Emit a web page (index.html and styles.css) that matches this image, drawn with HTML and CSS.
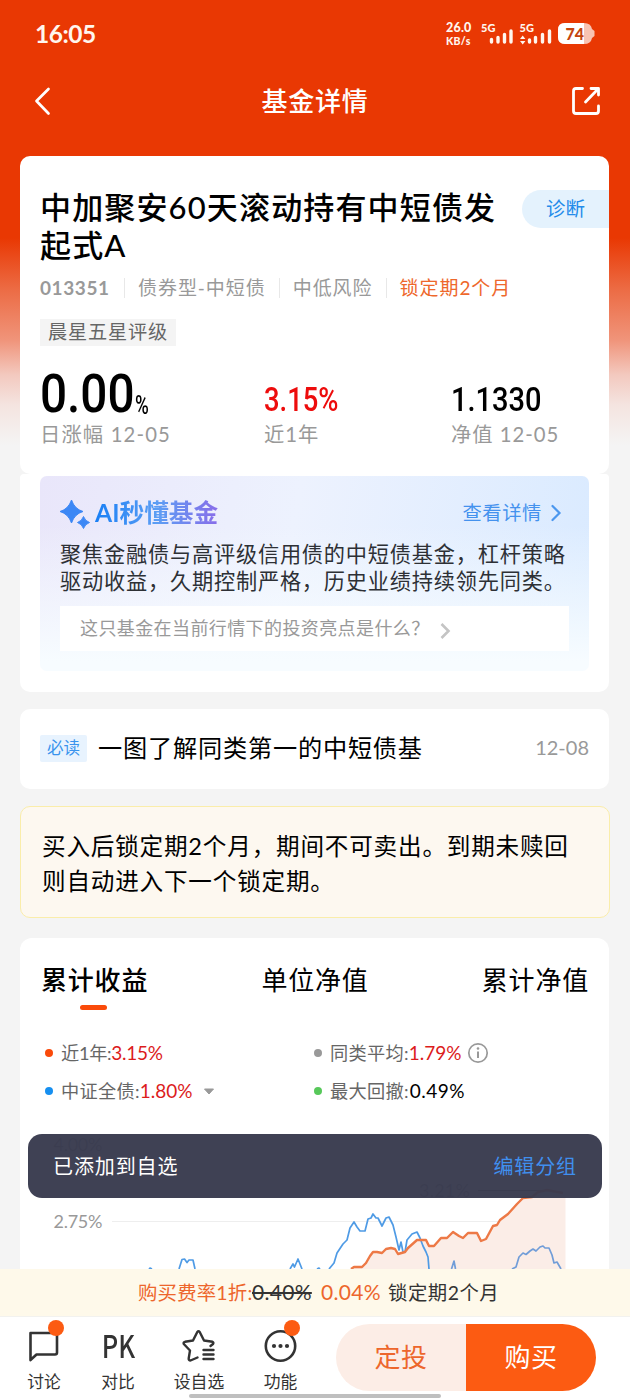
FILE: index.html
```html
<!DOCTYPE html>
<html lang="zh-CN">
<head>
<meta charset="utf-8">
<title>基金详情</title>
<link rel="stylesheet" href="styles.css">
</head>
<body>
<div class="screen">
  <header class="status">
    <span class="time">16:05</span>
    <div class="net"><span>26.0</span><span>KB/s</span></div>
    <svg class="signals" width="116" height="26" viewBox="480 20 116 26">
      <g class="sig-text"><text x="481" y="31.500" textLength="14.500">5G</text><text x="519.500" y="31.500" textLength="14.500">5G</text></g>
      <g stroke="#fff6ee" stroke-width="3.400" stroke-linecap="round">
        <path d="M491.500 39.500v2.500M498 37.500v4.500M504.500 34.500v7.500M511 31v11M529.500 40v2M535.500 37.500v4.500M542.500 34.500v7.500M549.500 31v11"/>
      </g>
      <path d="M520 39l2.700-3.500 2.700 3.500zM520 41l2.700 3.500 2.700-3.500z" fill="#fff6ee"/>
      <path d="M565 23h19q7 0 8 6l2.500 2v5l-2.500 2q-1 6-8 6h-19q-7 0-7-7v-7q0-7 7-7z" fill="#f8c3b2"/>
      <path d="M565 23h19v21h-19q-7 0-7-7v-7q0-7 7-7z" fill="#fff"/>
      <text class="batt" x="565.500" y="40" textLength="18.500" lengthAdjust="spacingAndGlyphs">74</text>
    </svg>
  </header>
  <nav class="topbar">
    <svg width="20" height="32" viewBox="0 0 20 32"><path d="M15.500 4L3.500 16 15.500 28.500" fill="none" stroke="#fff" stroke-width="2.700" stroke-linecap="round" stroke-linejoin="round"/></svg>
    <h1>基金详情</h1>
    <svg width="32" height="32" viewBox="0 0 32 32" fill="none" stroke="#fff" stroke-width="2.800" stroke-linecap="round" stroke-linejoin="round"><path d="M12.500 3.500H6Q3.500 3.500 3.500 6V26Q3.500 28.500 6 28.500H26Q28.500 28.500 28.500 26V21M15.500 17L28 4M21 3.500h7.500V10"/></svg>
  </nav>

  <section class="card fund">
    <div class="title-row">
      <h2>中加聚安60天滚动持有中短债发<br>起式A</h2>
      <span class="diagnose">诊断</span>
    </div>
    <div class="meta">
      <b>013351</b><span>债券型-中短债</span><span>中低风险</span><span class="lock">锁定期2个月</span>
    </div>
    <div class="rating">晨星五星评级</div>
    <div class="stats">
      <div><p class="big"><span>0.00</span><i>%</i></p><small class="day">日涨幅 12-05</small></div>
      <div><p class="mid up"><span>3.15%</span></p><small>近1年</small></div>
      <div><p class="mid nav-value"><span>1.1330</span></p><small>净值 12-05</small></div>
    </div>
  </section>

  <section class="card ai-card">
    <div class="ai">
      <div class="ai-head">
        <svg width="30" height="30" viewBox="0 0 30 30"><path d="M11.500 1Q14.500 10 23 12.500 14.500 15 11.500 24 8.500 15 0 12.500 8.500 10 11.500 1z" fill="#3c87f5" stroke="#3c87f5" stroke-linejoin="round"/><path d="M23.500 17.500Q25 22 29.500 23.500 25 25 23.500 29.500 22 25 17.500 23.500 22 22 23.500 17.500z" fill="#3c87f5" stroke="#3c87f5" stroke-linejoin="round"/></svg>
        <strong>AI秒懂基金</strong>
        <a>查看详情</a>
        <svg width="12" height="18" viewBox="0 0 12 18"><path d="M2.500 2l7 7-7 7" fill="none" stroke="#4b97ee" stroke-width="2.200" stroke-linecap="round"/></svg>
      </div>
      <p class="ai-text">聚焦金融债与高评级信用债的中短债基金，杠杆策略<br>驱动收益，久期控制严格，历史业绩持续领先同类。</p>
      <div class="ask"><span>这只基金在当前行情下的投资亮点是什么？</span>
        <svg width="12" height="20" viewBox="0 0 12 20"><path d="M2.500 3l7 7-7 7" fill="none" stroke="#c4c4c4" stroke-width="2.600"/></svg>
      </div>
    </div>
  </section>

  <section class="card must-read">
    <span class="badge">必读</span><span class="headline">一图了解同类第一的中短债基</span><time>12-08</time>
  </section>

  <section class="notice">买入后锁定期2个月，期间不可卖出。到期未赎回<br>则自动进入下一个锁定期。</section>

  <section class="card performance">
    <div class="tabs"><span class="active">累计收益</span><span>单位净值</span><span>累计净值</span></div>
    <div class="legend">
      <div class="item red"><span>近1年:</span><b>3.15%</b></div>
      <div class="item gray"><span>同类平均:</span><b>1.79%</b>
        <svg class="info" width="22" height="22" viewBox="0 0 22 22"><circle cx="11" cy="11" r="9.200" fill="none" stroke="#999" stroke-width="1.700"/><path d="M11 9.500v6.500" stroke="#999" stroke-width="2"/><circle cx="11" cy="6.500" r="1.300" fill="#999"/></svg></div>
      <div class="item blue"><span>中证全债:</span><b>1.80%</b><svg class="caret" width="12" height="8" viewBox="0 0 12 8"><path d="M1.500 1h9L6 6z" fill="#999" stroke="#999" stroke-linejoin="round"/></svg></div>
      <div class="item green"><span>最大回撤:</span><b>0.49%</b></div>
    </div>
    <svg class="chart" width="590" height="149" viewBox="20 1120 590 149">
      <path d="M112 1221.500H565" stroke="#eee"/>
      <path d="M351 1269L354 1267 362 1267 366 1263 370 1256 373 1252 377 1252 382 1253 386 1249 391 1248 395 1249 398 1254 405 1252 408 1248 417 1240 426 1240 429 1246 434 1246 441 1238 447 1238 453 1232 459 1236 463 1238 468 1233 477 1233 481 1241 486 1239 493 1226 497 1225 500 1220 508 1214 517 1204 523 1198 532 1197 538 1192 547 1190 563 1193 565.500 1193V1269z" fill="#fbede7"/>
      <path d="M478 1190.500H550" stroke="#777"/>
      <g fill="none" stroke="#4f9be5" stroke-width="1.700" stroke-linejoin="round">
        <path d="M149 1269l1-1 2 1M179 1269L182 1259.500 184.500 1259 187 1262.500 189 1260 193 1260 195 1269M290 1269L293 1264 294.500 1267 298 1259 302 1269M317 1269l2-1 1 1M329 1269L334 1263 337 1253 343 1244 347 1240 350 1228 354 1222 357 1227 360 1231 365 1231 368 1219 371 1218 373 1214 376 1218 378 1218 382 1226 386 1218 389 1217 393 1225 396 1237 399 1250 401 1242 403 1252 405 1252 407 1240 412 1234 417 1232 420 1238 423 1246 426 1252 428 1257 429 1269"/>
        <path stroke="#719dd8" d="M451.500 1269L454 1261 455.500 1269M512 1269L516 1267 519 1257 523 1253 526 1254.500 530 1251 533 1249 536 1251 540 1247 543 1246 545 1248 549 1248 552 1255 554 1263 557 1262 561 1269"/>
      </g>
      <path d="M351 1269L354 1267 362 1267 366 1263 370 1256 373 1252 377 1252 382 1253 386 1249 391 1248 395 1249 398 1254 405 1252 408 1248 417 1240 426 1240 429 1246 434 1246 441 1238 447 1238 453 1232 459 1236 463 1238 468 1233 477 1233 481 1241 486 1239 493 1226 497 1225 500 1220 508 1214 517 1204 523 1198 532 1197 538 1192 547 1190 563 1193" fill="none" stroke="#ed7946" stroke-width="2.400" stroke-linejoin="round"/>
      <g class="axis"><text x="53.500" y="1151" textLength="49">4.00%</text><text x="53.500" y="1228" textLength="49">2.75%</text><text x="419" y="1197" textLength="51">3.21%</text></g>
    </svg>
  </section>

  <footer class="bottom">
    <div class="toast"><span>已添加到自选</span><a>编辑分组</a></div>
    <div class="fee"><span class="rate">购买费率1折:</span><s>0.40%</s><span class="now">0.04%</span><span class="term">锁定期2个月</span></div>
    <div class="actions">
      <div class="act dot"><svg width="34" height="34" viewBox="0 0 34 34"><path d="M3.500 4H28Q30 4 30 6V23.500Q30 25.500 28 25.500H9.500L3.500 31z" fill="none" stroke="#333" stroke-width="2.600" stroke-linejoin="round"/></svg><span>讨论</span></div>
      <div class="act"><em>PK</em><span>对比</span></div>
      <div class="act"><svg width="36" height="34" viewBox="0 0 36 34" fill="none" stroke="#333" stroke-width="2.400" stroke-linecap="round" stroke-linejoin="round"><path d="M16.500 28.500L9.500 31.500Q7.500 31.500 7.700 29.500L9 21.500 2.800 15Q2 13.300 4 12.800L12 11.500 16.300 3Q17.500 1.500 18.700 3L23 11.500 31.500 12.800Q33 13.500 32 15L29.500 17M22.500 21h10M22.500 25.500h10M22.500 30h10"/></svg><span>设自选</span></div>
      <div class="act dot"><svg width="34" height="34" viewBox="0 0 34 34"><circle cx="16.500" cy="17" r="14.700" fill="none" stroke="#333" stroke-width="2.600"/><g fill="#333"><circle cx="10" cy="17" r="2.100"/><circle cx="16.500" cy="17" r="2.100"/><circle cx="23" cy="17" r="2.100"/></g></svg><span>功能</span></div>
      <div class="buttons"><button class="plan">定投</button><button class="buy">购买</button></div>
    </div>
    <div class="home"></div>
  </footer>
</div>
</body>
</html>
```
FILE: styles.css
```css
* { box-sizing: border-box; margin: 0; padding: 0; }
body {
  width: 630px; height: 1400px; overflow: hidden;
  font-family: Lato, "Noto Sans CJK SC", sans-serif;
  color: #000; background: #f4f4f4;
}
.screen {
  width: 630px; height: 1400px; overflow: hidden;
  display: flex; flex-direction: column;
  background: linear-gradient(#e93803 0, #e93803 238px, #ec6c45 290px, #f0947a 340px, #f3c9bf 375px, #f4e4e0 405px, #f4f4f4 445px);
}
svg { display: block; flex: none; }
span, a, small, b, strong { white-space: nowrap; }
i, em { font-style: normal; }

.status { flex: none; height: 66px; padding: 20px 34px 0 35px; display: flex; align-items: flex-start; color: #fff6ee; }
.time { width: 62px; font-size: 24.5px; line-height: 27px; font-weight: 700; letter-spacing: -.5px; }
.net { margin-left: 349px; width: 34px; display: flex; flex-direction: column; padding-top: 1px; font-weight: 900; }
.net span:first-child { font-size: 12.500px; line-height: 14px; letter-spacing: .2px; }
.net span:last-child { font-size: 10.5px; line-height: 12px; letter-spacing: .3px; }
.sig-text { font-size: 11px; font-weight: 900; fill: #fff6ee; }
.batt { font-size: 17px; font-weight: 900; fill: #c4440e; }

.topbar { flex: none; height: 90px; padding: 19px 28px 0 33px; display: flex; justify-content: space-between; align-items: flex-start; color: #fff; }
.topbar h1 { font-size: 26px; line-height: 32px; font-weight: 500; letter-spacing: .8px; margin: 0 0 0 7px; }

.card { margin: 0 21px 0 20px; background: #fff; border-radius: 10px; flex: none; }
.fund { height: 318px; padding: 34px 0 0 20px; }
.title-row { display: flex; justify-content: space-between; align-items: flex-start; }
.title-row h2 { margin-top: -1px; font-size: 31px; line-height: 37.5px; font-weight: 500; letter-spacing: 1.150px; white-space: nowrap; }
.diagnose { width: 87px; height: 38px; border-radius: 19px 0 0 19px; background: #e4f2fd; color: #238bea; font-size: 19.5px; line-height: 38px; padding-left: 24px; }
.meta { display: flex; height: 20px; margin-top: 14px; font-size: 19px; line-height: 20px; letter-spacing: .95px; color: #999; }
.meta > * + * { border-left: 1px solid #e8e8e8; padding-left: 13px; margin-left: 13px; }
.meta b { width: 71px; font-weight: 700; letter-spacing: .6px; }
.meta .lock { color: #ee682c; }
.rating { width: 136px; height: 27px; margin-top: 21px; padding-left: 8px; background: #f4f4f4; color: #666; font-size: 19.2px; line-height: 26px; letter-spacing: .8px; }
.stats { display: grid; grid-template-columns: 224px 187px 1fr; margin-top: 22px; }
.stats p { height: 54px; display: flex; font-family: Roboto, sans-serif; }
.stats p span { transform-origin: 0 50%; }
.stats small { display: block; font-size: 20.3px; line-height: 24px; letter-spacing: 1px; color: #999; }
.stats .day { letter-spacing: 1.150px; }
.big span { width: 95px; font-size: 53px; line-height: 53px; font-weight: 500; transform: scaleX(.9); }
.big i { font-size: 25px; line-height: 76px; font-weight: 500; transform: scaleX(.75); transform-origin: 0 50%; }
.mid span { font-size: 33px; line-height: 63px; font-weight: 500; transform: scaleX(.83); }
.mid.up { color: #ed0c0c; }
.mid.nav-value span { transform: scaleX(.88); }

.ai-card { height: 218px; padding: 2px 20px 0; border-radius: 4px 4px 10px 10px; }
.ai { height: 195px; border-radius: 7px; padding: 18px 20px 0; background: linear-gradient(rgba(247,252,255,0) 25%, #f7fcff 95%), linear-gradient(100deg, #e9e6fa 0, #edf2fe 45%, #d9eaff 100%); }
.ai-head { height: 40px; display: flex; align-items: flex-start; padding-top: 5px; }
.ai-head strong { margin: -3px 0 0 5px; font-size: 24.7px; line-height: 34px; font-weight: 700; background: linear-gradient(90deg, #187ff5, #5c9ef4 50%, #886de9); -webkit-background-clip: text; background-clip: text; color: transparent; }
.ai-head a { margin: 1px 8px 0 auto; font-size: 19.3px; line-height: 26px; letter-spacing: .6px; color: #4492ee; }
.ai-head a + svg { margin: 5px 7px 0 0; }
.ai-text { padding-top: 7px; font-size: 21.2px; line-height: 26.5px; letter-spacing: .8px; color: #2d3035; white-space: nowrap; }
.ask { height: 45px; margin-top: 12px; padding-left: 20px; display: flex; align-items: center; gap: 9px; background: #fff; color: #999; font-size: 18px; letter-spacing: .4px; }
.ask span { margin-top: -3px; }
.ask svg { margin-top: 4px; }

.must-read { height: 80px; margin-top: 17px; padding: 0 20px; display: flex; align-items: center; }
.badge { width: 47px; height: 27px; margin-top: -2px; background: #e8f3fe; border-radius: 2px; color: #3993ed; font-size: 16.6px; line-height: 26px; text-align: center; }
.headline { margin: -5px 0 0 11px; font-size: 24.2px; letter-spacing: .8px; }
.must-read time { margin: -4px 0 0 auto; font-size: 20px; color: #999; }
.notice { flex: none; height: 112px; margin: 17px 20px 0; padding: 22px 21px; border: 1.500px solid #faedaa; border-radius: 10px; background: #fdf8f0; font-size: 23.6px; line-height: 34.5px; letter-spacing: .8px; white-space: nowrap; }

.performance { height: 480px; margin-top: 20px; border-radius: 12px; }
.tabs { height: 73px; padding: 26px 20px 0 21px; display: flex; justify-content: space-between; font-size: 26px; line-height: 32px; letter-spacing: .8px; }
.tabs .active { font-weight: 500; display: flex; flex-direction: column; align-items: center; }
.active::after { content: ""; width: 27px; height: 5px; margin: 9px 2px 0 0; border-radius: 3px; background: #fa4a0a; }
.legend { height: 109px; padding: 24px 0 0 25px; display: grid; grid-template-columns: 269px 1fr; grid-auto-rows: 38px; align-content: start; }
.item { height: 38px; display: flex; align-items: center; font-size: 18.2px; line-height: 22px; letter-spacing: .3px; color: #666; }
.item span, .item b { margin-top: -3px; }
.item::before { content: ""; width: 8px; height: 8px; margin: -3px 8px 0 0; border-radius: 50%; background: var(--c); }
.item b { font-size: 19px; font-weight: 400; letter-spacing: 0; color: #dc1c1c; }
.item.red span, .item.red b { letter-spacing: -.3px; }
.red { --c: #fa4a0a; } .gray { --c: #999; } .blue { --c: #168ff0; } .green { --c: #57c85a; }
.item.green b { color: #000; letter-spacing: .5px; margin-left: 1px; }
.info { margin: -2px 0 0 5px; }
.caret { margin-left: 10px; margin-top: 0; }
.axis { font-size: 18px; fill: #999; }

.bottom { position: absolute; left: 0; top: 1134px; width: 630px; }
.toast { height: 64px; margin: 0 28px 71px; padding: 0 25px 1px; border-radius: 14px; background: rgba(56,58,78,.965); display: flex; align-items: center; justify-content: space-between; color: #fff; font-size: 20px; letter-spacing: .9px; }
.toast a { color: #408fee; }
.fee { height: 48px; padding: 0 0 3px 138px; display: flex; align-items: center; background: #fef9ea; border-bottom: 1px solid #f2f2ef; font-size: 19.4px; letter-spacing: .5px; color: #333; }
.fee .rate { width: 114px; letter-spacing: .2px; }
.fee s, .fee .now { width: 60px; font-size: 21px; letter-spacing: .3px; }
.fee s { text-decoration-thickness: 1.500px; }
.fee .rate, .fee .now { color: #ed662c; }
.fee .now { margin: 0 7px 0 9px; }
.actions { height: 83px; background: #fff; padding: 7px 34px 0 7px; display: flex; }
.act { position: relative; width: 74px; padding-top: 5px; display: flex; flex-direction: column; align-items: center; font-size: 16.800px; color: #333; }
.act:nth-child(3) { width: 88px; }
.act:nth-child(4) { width: 75px; }
.act span { line-height: 20px; margin-top: 9px; }
.act em { height: 34px; font-size: 31px; line-height: 32px; font-weight: 500; font-family: "Noto Sans CJK SC", sans-serif; transform: scaleX(.82); }
.dot::after { content: ""; position: absolute; left: 41px; top: -4px; width: 16px; height: 16px; border-radius: 50%; background: #fc5b12; }
.buttons { display: flex; margin-left: auto; height: 67px; width: 260px; border-radius: 34px; overflow: hidden; }
.buttons button { flex: 1; border: 0; font: 26px/67px Lato, "Noto Sans CJK SC", sans-serif; letter-spacing: .5px; }
.plan { background: #fcede6; color: #ed662c; }
.buy { background: #fc5b12; color: #fff; }
.home { position: absolute; left: 189px; bottom: 2px; width: 252px; height: 4px; border-radius: 2px; background: #bfbfbf; }
```
